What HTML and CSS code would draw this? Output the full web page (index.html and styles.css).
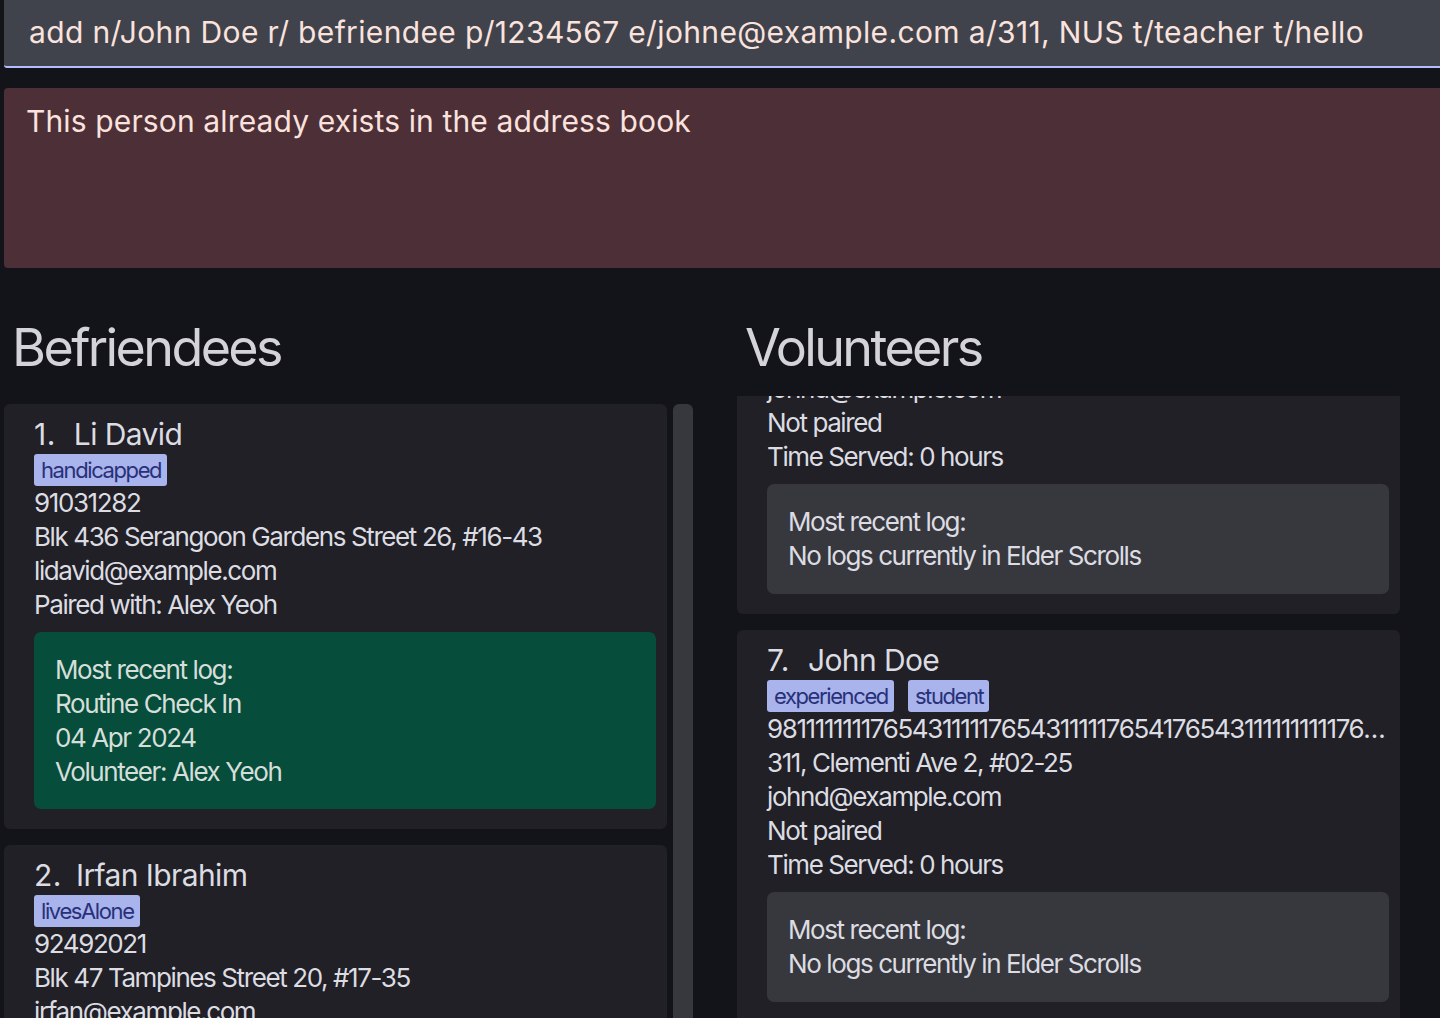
FILE: index.html
```html
<!DOCTYPE html>
<html lang="en">
<head>
<meta charset="utf-8">
<title>Elder Scrolls</title>
<link rel="stylesheet" href="styles.css">
</head>
<body>
<div class="app">
  <div class="command-box">add n/John Doe r/ befriendee p/1234567 e/johne@example.com a/311, NUS t/teacher t/hello</div>
  <div class="result-box">This person already exists in the address book</div>
  <div class="panes">
    <section class="pane">
      <h2 class="pane-title">Befriendees</h2>
      <div class="list list-left">
        <div class="cards">
          <div class="card">
            <div class="name"><span class="idx">1.</span>Li David</div>
            <div class="tags"><span class="tag">handicapped</span></div>
            <div class="field">91031282</div>
            <div class="field">Blk 436 Serangoon Gardens Street 26, #16-43</div>
            <div class="field">lidavid@example.com</div>
            <div class="field">Paired with: Alex Yeoh</div>
            <div class="log log-green">
              <div class="field">Most recent log:</div>
              <div class="field">Routine Check In</div>
              <div class="field">04 Apr 2024</div>
              <div class="field">Volunteer: Alex Yeoh</div>
            </div>
          </div>
          <div class="card">
            <div class="name"><span class="idx idx-2">2.</span>Irfan Ibrahim</div>
            <div class="tags"><span class="tag">livesAlone</span></div>
            <div class="field">92492021</div>
            <div class="field">Blk 47 Tampines Street 20, #17-35</div>
            <div class="field">irfan@example.com</div>
            <div class="field">Not paired</div>
          </div>
        </div>
        <div class="scrollbar"></div>
      </div>
    </section>
    <section class="pane">
      <h2 class="pane-title">Volunteers</h2>
      <div class="list list-right">
        <div class="cards">
          <div class="card card-tail">
            <div class="field tail-first">johnd@example.com</div>
            <div class="field">Not paired</div>
            <div class="field">Time Served: 0 hours</div>
            <div class="log log-gray">
              <div class="field">Most recent log:</div>
              <div class="field">No logs currently in Elder Scrolls</div>
            </div>
          </div>
          <div class="card">
            <div class="name"><span class="idx">7.</span>John Doe</div>
            <div class="tags"><span class="tag">experienced</span><span class="tag">student</span></div>
            <div class="field ellipsis">98111111117654311111765431111176541765431111111111765431111176543</div>
            <div class="field">311, Clementi Ave 2, #02-25</div>
            <div class="field">johnd@example.com</div>
            <div class="field">Not paired</div>
            <div class="field">Time Served: 0 hours</div>
            <div class="log log-gray">
              <div class="field">Most recent log:</div>
              <div class="field">No logs currently in Elder Scrolls</div>
            </div>
          </div>
        </div>
      </div>
    </section>
  </div>
</div>
</body>
</html>
```
FILE: styles.css
```css
html, body {
  margin: 0;
  padding: 0;
  background: #131419;
  overflow: hidden;
}

body {
  font-family: Inter, "Noto Sans", sans-serif;
  color: #dcdce2;
}

.app {
  height: 1018px;
  display: flex;
  flex-direction: column;
}

.command-box {
  margin-left: 4px;
  height: 66px;
  line-height: 64px;
  padding-left: 25px;
  font-size: 30px;
  letter-spacing: 0.35px;
  color: #fae2dd;
  background: #41434c;
  border-bottom: 2px solid #b4befe;
  border-bottom-left-radius: 3px;
  white-space: nowrap;
}

.result-box {
  margin: 20px 0 0 4px;
  height: 180px;
  box-sizing: border-box;
  padding: 13px 0 0 22px;
  font-size: 30px;
  line-height: 40px;
  letter-spacing: 0.13px;
  color: #fae2dd;
  background: #4d2f38;
  border-radius: 4px 0 0 4px;
}

.panes {
  flex: 1;
  min-height: 0;
  display: flex;
  gap: 44px;
  padding-left: 4px;
}

.pane {
  width: 689px;
  display: flex;
  flex-direction: column;
  min-height: 0;
}

.pane-title {
  margin: 48px 0 16px 8px;
  font-size: 52px;
  line-height: 64px;
  font-weight: 400;
  letter-spacing: -2.6px;
  color: #d4d3da;
}

.list {
  flex: 1;
  min-height: 0;
  overflow: hidden;
  display: flex;
  align-items: stretch;
}

.list-left {
  margin-top: 8px;
}

.cards {
  width: 663px;
  display: flex;
  flex-direction: column;
  gap: 16px;
}

.scrollbar {
  width: 20px;
  margin-left: 6px;
  background: #37383e;
  border-radius: 6px 6px 0 0;
}

.card {
  background: #202026;
  border-radius: 6px;
  padding: 12px 11px 20px 30px;
  flex-shrink: 0;
}

.card-tail {
  padding-top: 0;
  border-radius: 0 0 6px 6px;
}

.tail-first {
  margin-top: -24px;
}

.name {
  font-size: 30px;
  line-height: 36px;
  letter-spacing: -0.6px;
  color: #dcdce2;
  white-space: nowrap;
}

.idx {
  letter-spacing: 0.5px;
  margin-right: 18px;
}

.idx-2 {
  margin-right: 14px;
}

.tags {
  margin-top: 2px;
  display: flex;
  gap: 14px;
  height: 32px;
}

.tag {
  display: inline-block;
  height: 32px;
  line-height: 32px;
  padding: 0 6px 0 7px;
  font-size: 22px;
  letter-spacing: -1.4px;
  background: #a9b3ec;
  color: #283178;
  border-radius: 3px;
}

.field {
  font-size: 26px;
  line-height: 34px;
  letter-spacing: -1.4px;
  color: #dcdce2;
  white-space: nowrap;
}

.ellipsis {
  overflow: hidden;
  text-overflow: ellipsis;
}

.log {
  margin-top: 10px;
  padding: 21px 21px 20px 21px;
  border-radius: 7px;
}

.log-green {
  background: #064d3b;
}

.log-green .field {
  color: #d5ded9;
}

.log-gray {
  background: #37383e;
  padding-bottom: 21px;
}
```
